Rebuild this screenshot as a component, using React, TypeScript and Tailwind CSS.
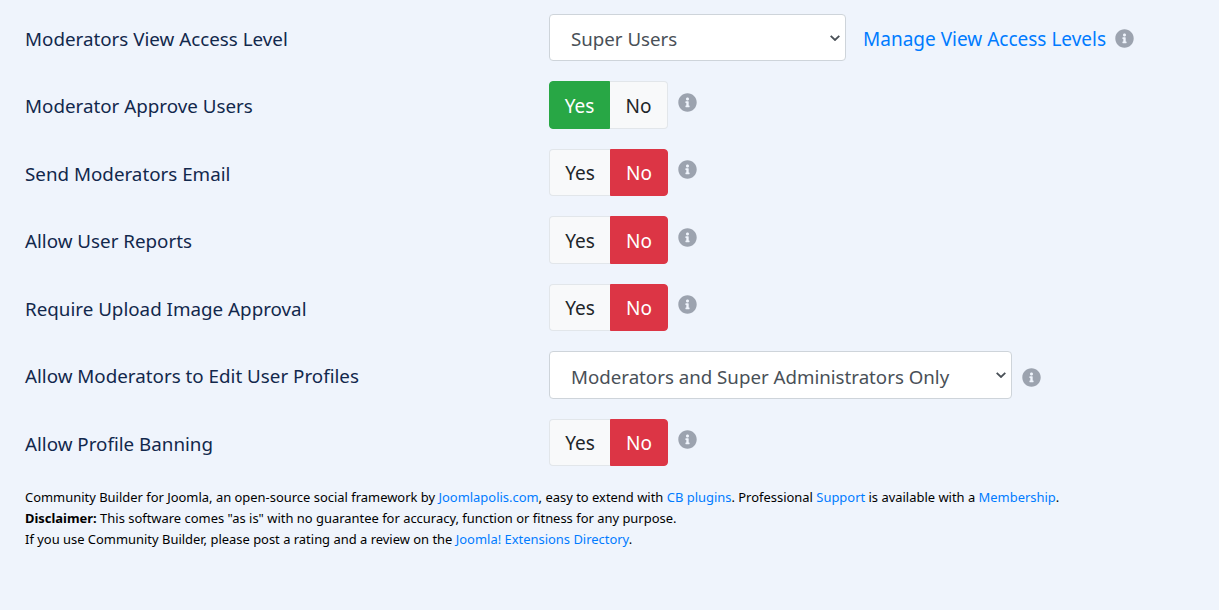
import { FaInfoCircle } from 'react-icons/fa'

const rows = [
  { label: 'Moderator Approve Users', yes: true },
  { label: 'Send Moderators Email', yes: false },
  { label: 'Allow User Reports', yes: false },
  { label: 'Require Upload Image Approval', yes: false },
]

function Label({ children }: { children: string }) {
  return <div className="w-[524px] shrink-0 pt-[3px] text-[18.8px] text-[#12284c]">{children}</div>
}

function Info({ className = '' }: { className?: string }) {
  return <FaInfoCircle className={`w-[19px] h-[19px] text-[#9ca3af] shrink-0 ${className}`} />
}

function Toggle({ yes }: { yes: boolean }) {
  return (
    <div className="flex h-[47.5px] items-stretch">
      <div className={`w-[61px] pt-[2px] flex items-center justify-center rounded-l border ${yes ? 'bg-[#28a745] border-[#28a745] text-white' : 'bg-[#f8f9fa] border-[#e2e6ea] border-r-0 text-[#212529]'}`}>
        Yes
      </div>
      <div className={`w-[58px] pt-[2px] flex items-center justify-center rounded-r border ${yes ? 'bg-[#f8f9fa] border-[#e2e6ea] border-l-0 text-[#212529]' : 'bg-[#dc3545] border-[#dc3545] text-white'}`}>
        No
      </div>
    </div>
  )
}

function Row({ label, yes }: { label: string; yes: boolean }) {
  return (
    <div className="flex items-center mb-5 h-[47.5px]">
      <Label>{label}</Label>
      <Toggle yes={yes} />
      <Info className="ml-[10px] -mt-[5px]" />
    </div>
  )
}

function Select({ value, className }: { value: string; className: string }) {
  return (
    <div className={`relative ${className}`}>
      <select
        defaultValue={value}
        className="w-full h-[47.5px] appearance-none bg-white border border-[#ced4da] rounded pl-[21px] pt-[4px] text-[18.7px] text-[#495057]"
      >
        <option>{value}</option>
      </select>
      <svg viewBox="0 0 10 6" className="absolute right-[6px] top-[21px] w-[10px] h-[6px] pointer-events-none" fill="none" stroke="#495057" strokeWidth="1.8">
        <path d="M0.7 0.8 5 5 9.3 0.8" />
      </svg>
    </div>
  )
}

export default function App() {
  return (
    <div className="min-h-[610px] bg-[#eff4fc] pt-[13.5px] pl-[25px] text-[19px] font-['Noto_Sans',sans-serif]">
      <div className="flex items-center mb-5 h-[47.5px]">
        <Label>Moderators View Access Level</Label>
        <Select value="Super Users" className="w-[297px]" />
        <a className="ml-[17px] pt-[3px] text-[#007bff]">Manage View Access Levels</a>
        <Info className="ml-[9px] mt-[3px]" />
      </div>

      {rows.map((r) => (
        <Row key={r.label} label={r.label} yes={r.yes} />
      ))}

      <div className="flex items-center mb-5 h-[47.5px]">
        <Label>Allow Moderators to Edit User Profiles</Label>
        <Select value="Moderators and Super Administrators Only" className="w-[463px]" />
        <Info className="ml-[10px] mt-[5px]" />
      </div>

      <Row label="Allow Profile Banning" yes={false} />

      <div className="pt-[1px] text-[12.94px] leading-[21px] text-black">
        <div>
          Community Builder for Joomla, an open-source social framework by <a className="text-[#007bff]">Joomlapolis.com</a>, easy to extend with <a className="text-[#007bff]">CB plugins</a>. Professional <a className="text-[#007bff]">Support</a> is available with a <a className="text-[#007bff]">Membership</a>.
        </div>
        <div>
          <b>Disclaimer:</b> This software comes "as is" with no guarantee for accuracy, function or fitness for any purpose.
        </div>
        <div>
          If you use Community Builder, please post a rating and a review on the <a className="text-[#007bff]">Joomla! Extensions Directory</a>.
        </div>
      </div>
    </div>
  )
}
